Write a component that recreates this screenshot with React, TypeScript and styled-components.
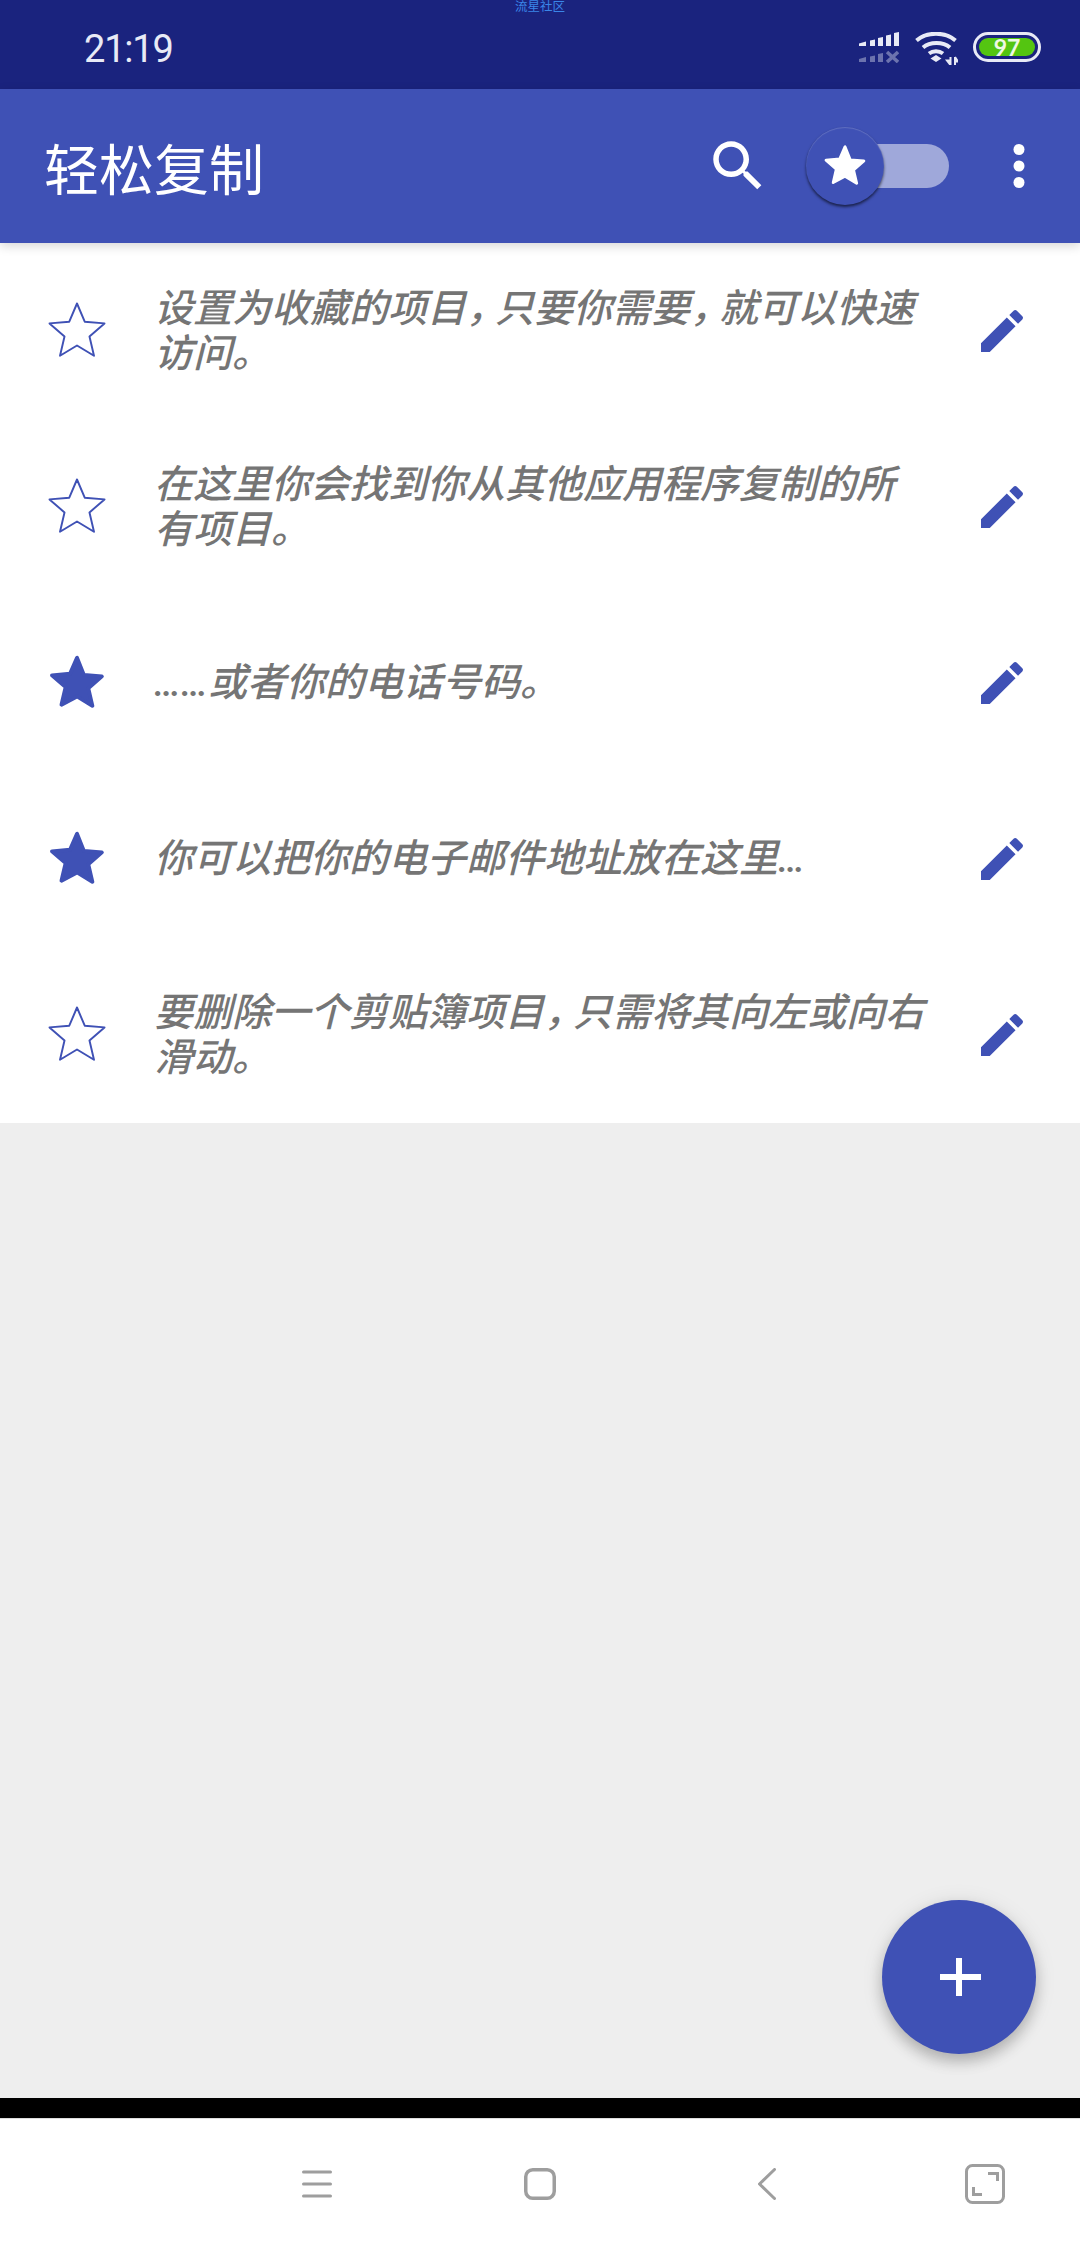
import React from "react";
import styled, { createGlobalStyle } from "styled-components";

const INDIGO = "#3f51b5";
const STAR = "M12 17.27L18.18 21l-1.64-7.03L22 9.24l-7.19-.61L12 2 9.19 8.63 2 9.24l5.46 4.73L5.82 21z";
// slightly inset star, thick round stroke brings it back out with soft tips
const SOFT_STAR = "M12 16.9l5.6 3.4-1.5-6.4 4.950-4.300-6.550-.55L12 2.800 9.450 8.650l-6.550.55 4.950 4.300-1.500 6.400z";
const PENCIL =
  "M3 17.25V21h3.75L17.81 9.94l-3.75-3.75L3 17.25zM20.71 7.04c.39-.39.39-1.02 0-1.41l-2.34-2.34c-.39-.39-1.02-.39-1.41 0l-1.83 1.83 3.75 3.75 1.83-1.83z";
const SEARCH =
  "M15.5 14h-.79l-.28-.27C15.41 12.59 16 11.11 16 9.5 16 5.91 13.09 3 9.5 3S3 5.91 3 9.5 5.91 16 9.5 16c1.61 0 3.09-.59 4.23-1.57l.27.28v.79l5 4.99L20.49 19l-4.99-5zm-6 0C7.01 14 5 11.99 5 9.5S7.01 5 9.5 5 14 7.01 14 9.5 11.99 14 9.5 14z";

const GlobalStyle = createGlobalStyle`
  html, body {
    margin: 0;
    padding: 0;
    background: #eeeeee;
  }
  * {
    box-sizing: border-box;
  }
`;

const Screen = styled.div`
  position: relative;
  display: flex;
  flex-direction: column;
  width: 1080px;
  height: 2248px;
  overflow: hidden;
  font-family: Roboto, "Noto Sans CJK SC", sans-serif;
`;

const StatusBar = styled.div`
  position: relative;
  display: flex;
  align-items: center;
  justify-content: space-between;
  height: 89px;
  padding: 8px 39px 0 84px;
  background: #1a237e;
`;

const Watermark = styled.div`
  position: absolute;
  top: 0;
  left: 515px;
  font-size: 12.5px;
  line-height: 13px;
  color: #3a86e8;
`;

const Clock = styled.span`
  font-size: 38px;
  letter-spacing: -1.2px;
  color: #e8eaf6;
`;

const StatusIcons = styled.div`
  display: flex;
  align-items: flex-start;
  gap: 16px;
  height: 33px;
`;

const Battery = styled.div`
  display: flex;
  width: 68px;
  height: 30px;
  margin-left: -1px;
  padding: 3px;
  border: 3px solid #e8eaf6;
  border-radius: 15px;
`;

const BatteryLevel = styled.div`
  flex: 1;
  border-radius: 9px;
  background: #54c511;
  color: #eef8e4;
  font-family: Lato, sans-serif;
  font-size: 23px;
  font-weight: 700;
  line-height: 18px;
  text-align: center;
`;

const AppBar = styled.header`
  position: relative;
  z-index: 1;
  display: flex;
  align-items: center;
  height: 154px;
  padding: 0 28px 0 44px;
  background: ${INDIGO};
  box-shadow: 0 3px 10px rgba(0, 0, 0, 0.16);
`;

const Title = styled.h1`
  flex: 1;
  margin: 0;
  font-size: 55px;
  font-weight: 400;
  color: #ffffff;
`;

const Toggle = styled.div`
  position: relative;
  width: 143px;
  height: 78px;
  margin: 0 37px 0 35px;
`;

const Track = styled.div`
  margin: 17px 0 0 32px;
  height: 44px;
  border-radius: 22px;
  background: #9fa8da;
`;

const Thumb = styled.div`
  position: absolute;
  top: 0;
  left: 0;
  display: flex;
  align-items: center;
  justify-content: center;
  width: 78px;
  height: 78px;
  border-radius: 50%;
  background: ${INDIGO};
  box-shadow: 0 2px 3px rgba(0, 0, 0, 0.6), inset 0 1px 1px rgba(255, 255, 255, 0.18);
`;

const List = styled.div`
  display: flex;
  flex-direction: column;
  background: #ffffff;
`;

const Row = styled.div`
  display: flex;
  align-items: center;
  height: 176px;
  padding: 0 50px 0 44px;
`;

const Message = styled.p`
  flex: 1;
  margin: 0 0 0 44px;
  padding-top: 1px;
  font-size: 39px;
  font-style: italic;
  font-weight: 500;
  line-height: 45px;
  color: #757575;
`;

const Comma = styled.span`
  letter-spacing: -10px;
`;

const Spacer = styled.div`
  flex: 1;
  background: #eeeeee;
`;

const BlackBar = styled.div`
  height: 20px;
  background: #000000;
`;

const NavBar = styled.nav`
  display: grid;
  grid-template-columns: 252px 194px 260px 176px;
  justify-items: center;
  align-items: center;
  align-content: center;
  height: 130px;
  padding-left: 191px;
  border-top: 1px solid #dddddd;
  background: #ffffff;
`;

const Fab = styled.button`
  position: absolute;
  top: 1900px;
  left: 882px;
  display: flex;
  align-items: center;
  justify-content: center;
  width: 154px;
  height: 154px;
  padding: 0;
  border: 0;
  border-radius: 50%;
  background: ${INDIGO};
  box-shadow: 0 8px 14px rgba(0, 0, 0, 0.2), 0 3px 22px rgba(0, 0, 0, 0.1);
`;

const items = [
  { lines: ["设置为收藏的项目，只要你需要，就可以快速", "访问。"], starred: false },
  { lines: ["在这里你会找到你从其他应用程序复制的所", "有项目。"], starred: false },
  { lines: ["……或者你的电话号码。"], starred: true },
  { lines: ["你可以把你的电子邮件地址放在这里…"], starred: true },
  { lines: ["要删除一个剪贴簿项目，只需将其向左或向右", "滑动。"], starred: false },
];

const StarIcon = ({ filled }: { filled: boolean }) => (
  <svg width="66" height="66" viewBox="0 0 24 24">
    {filled ? (
      <path d={SOFT_STAR} fill={INDIGO} stroke={INDIGO} strokeWidth="1.4" strokeLinejoin="round" />
    ) : (
      <path d={STAR} fill="none" stroke={INDIGO} strokeWidth="0.7" strokeLinejoin="round" />
    )}
  </svg>
);

const SignalIcon = () => (
  <svg width="40" height="31" viewBox="0 0 40 31" fill="#e8eaf6">
    <path d="M0 11.500L7 9.500V14H0zM11 8.500l5-1V14h-5zM19 6l5-1v9h-5zM27 3.500l5-1V14h-5zM35 1l5-1v14h-5z" />
    <g opacity="0.4">
      <path d="M0 27l7-2v5H0zM11 24.500l5-1V30h-5zM19 22l5-1v9h-5z" />
      <path d="M28 20l11 10M39 20L28 30" stroke="#e8eaf6" strokeWidth="3.500" fill="none" />
    </g>
  </svg>
);

const WifiIcon = () => (
  <svg width="43" height="33" viewBox="0 0 43 33" fill="none" stroke="#e8eaf6" strokeWidth="4">
    <path d="M1.500 8.500C12 -.5 30 -.5 40.500 8.500" />
    <path d="M8 15.500c7-6 20-6 27 0" />
    <path d="M14 21.500c4-3 10-3 14 0" />
    <path d="M15.500 26.500L21 23l5.500 3.500L21 30z" fill="#e8eaf6" stroke="none" />
    <path d="M35.500 25v8M35.500 33L32 28.500h3.500M40 33v-8M40 25l3 4.500h-3" strokeWidth="2" fill="#e8eaf6" />
  </svg>
);

const NavMenu = () => (
  <svg width="30" height="30" viewBox="0 0 30 30" stroke="#9e9e9e" strokeWidth="3" strokeLinecap="round">
    <path d="M1.500 3h27M1.500 15h27M1.500 27h27" />
  </svg>
);

const NavHome = () => (
  <svg width="32" height="32" viewBox="0 0 32 32" fill="none" stroke="#9e9e9e" strokeWidth="3.500">
    <rect x="1.750" y="1.750" width="28.500" height="28.500" rx="7" />
  </svg>
);

const NavBack = () => (
  <svg width="18" height="32" viewBox="0 0 18 32" fill="none" stroke="#9e9e9e" strokeWidth="3" strokeLinecap="round" strokeLinejoin="round">
    <path d="M16.500 1.500L1.500 16l15 14.500" />
  </svg>
);

const NavExpand = () => (
  <svg width="40" height="40" viewBox="0 0 40 40" fill="none" stroke="#9e9e9e" strokeWidth="3">
    <rect x="1.500" y="1.500" width="37" height="37" rx="6" />
    <path d="M23 9.500h9.500V17M8.500 23v7.500H17" />
  </svg>
);

// commas are narrower in the reference than a full CJK cell
const renderLine = (line: string) =>
  line.split("，").map((part, i) => (
    <React.Fragment key={i}>
      {i > 0 && <Comma>，</Comma>}
      {part}
    </React.Fragment>
  ));

export default function App() {
  return (
    <Screen>
      <GlobalStyle />
      <StatusBar>
        <Watermark>流星社区</Watermark>
        <Clock>21:19</Clock>
        <StatusIcons>
          <SignalIcon />
          <WifiIcon />
          <Battery>
            <BatteryLevel>97</BatteryLevel>
          </Battery>
        </StatusIcons>
      </StatusBar>
      <AppBar>
        <Title>轻松复制</Title>
        <svg width="66" height="66" viewBox="0 0 24 24" fill="#ffffff">
          <path d={SEARCH} />
        </svg>
        <Toggle>
          <Track />
          <Thumb>
            <svg width="50" height="50" viewBox="0 0 24 24" fill="#ffffff" stroke="#ffffff" strokeWidth="1.4" strokeLinejoin="round">
              <path d={SOFT_STAR} />
            </svg>
          </Thumb>
        </Toggle>
        <svg width="66" height="66" viewBox="0 0 24 24" fill="#ffffff">
          <circle cx="12" cy="6" r="2" />
          <circle cx="12" cy="12" r="2" />
          <circle cx="12" cy="18" r="2" />
        </svg>
      </AppBar>
      <List>
        {items.map((item, index) => (
          <Row key={index}>
            <StarIcon filled={item.starred} />
            <Message>
              {item.lines.map((line) => (
                <React.Fragment key={line}>
                  {renderLine(line)}
                  <br />
                </React.Fragment>
              ))}
            </Message>
            <svg width="56" height="56" viewBox="0 0 24 24" fill={INDIGO}>
              <path d={PENCIL} />
            </svg>
          </Row>
        ))}
      </List>
      <Spacer />
      <BlackBar />
      <NavBar>
        <NavMenu />
        <NavHome />
        <NavBack />
        <NavExpand />
      </NavBar>
      <Fab>
        <svg width="154" height="154" viewBox="0 0 154 154" fill="#ffffff">
          <path d="M74 58h6v16h19v6H80v16h-6V80H58v-6h16z" />
        </svg>
      </Fab>
    </Screen>
  );
}
